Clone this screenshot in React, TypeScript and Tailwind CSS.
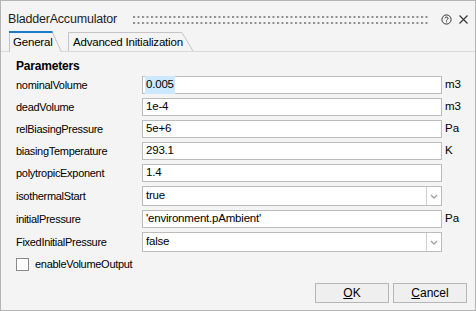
import React from "react";

function Chevron() {
  return (
    <svg width="8" height="5" viewBox="0 0 8 5">
      <path d="M1 1 L4 4 L7 1" fill="none" stroke="#a0a0a0" strokeWidth="1.3" />
    </svg>
  );
}

function TextRow({ label, value, unit, selected }: { label: string; value: string; unit?: string; selected?: boolean }) {
  return (
    <div className="h-[22px] flex items-start">
      <div className="w-[126px] h-[18px] flex items-center text-[11px] tracking-[-0.3px]">{label}</div>
      <div className="w-[300px] h-[18px] border border-[#bcbcbc] bg-white pl-[2px] flex items-center text-[11.5px] tracking-[-0.2px]">
        {selected ? <span className="bg-[#cce8ff] px-[1px]">{value}</span> : <span className="px-[1px]">{value}</span>}
      </div>
      <div className="ml-[3px] h-[18px] flex items-center text-[11.5px]">{unit}</div>
    </div>
  );
}

function ComboRow({ label, value }: { label: string; value: string }) {
  return (
    <div className="h-[24px] flex items-start">
      <div className="w-[126px] h-[20px] flex items-center text-[11px] tracking-[-0.3px]">{label}</div>
      <div className="w-[300px] h-[20px] border border-[#bcbcbc] bg-white flex items-stretch">
        <div className="flex-1 pl-[3px] flex items-center text-[11.5px] tracking-[-0.2px]">{value}</div>
        <div className="w-[15px] border-l border-[#d0d0d0] flex items-center justify-center">
          <Chevron />
        </div>
      </div>
    </div>
  );
}

export default function App() {
  return (
    <div className="w-[476px] h-[311px] border border-[#b4b4b4] bg-[#f4f4f4] flex flex-col text-black font-['Liberation_Sans',Arial,sans-serif]">
      {/* title bar */}
      <div className="h-[30px] pt-[7px] pl-[7px] flex items-center">
        <div className="text-[12.5px] text-[#1e1e1e] tracking-[-0.2px]">BladderAccumulator</div>
        <svg className="ml-[16px]" width="296" height="8">
          <defs>
            <pattern id="grip" width="4.5" height="6" patternUnits="userSpaceOnUse">
              <rect x="0" y="0" width="2" height="2" fill="#8c8c8c" />
            </pattern>
          </defs>
          <rect x="0" y="0" width="296" height="8" fill="url(#grip)" />
        </svg>
        <svg className="ml-[12px]" width="11" height="11" viewBox="0 0 11 11">
          <circle cx="5.5" cy="5.5" r="4.6" fill="none" stroke="#333" strokeWidth="1" />
          <path d="M3.9 4.3 C3.9 2.6 7.1 2.6 7.1 4.3 C7.1 5.4 5.5 5.4 5.5 6.6" fill="none" stroke="#333" strokeWidth="1" />
          <rect x="5" y="7.4" width="1" height="1" fill="#333" />
        </svg>
        <svg className="ml-[7px]" width="9" height="9" viewBox="0 0 9 9">
          <path d="M0.5 0.5 L8.5 8.5 M8.5 0.5 L0.5 8.5" stroke="#333" strokeWidth="1.1" />
        </svg>
      </div>
      {/* tabs */}
      <div className="h-[20px] flex items-end pl-[8px]">
        <div className="relative z-10 w-[53px] h-[21px] mb-[-1px] flex items-start">
          <svg className="absolute inset-0" width="53" height="21">
            <polygon points="0,0 43,0 52.5,21 0,21" fill="#f4f4f4" />
            <path d="M0.5 21 V1 M43 0.5 L52.5 21" fill="none" stroke="#c4c4c4" strokeWidth="1" />
            <rect x="0" y="0" width="43.5" height="2" fill="#1a7cc8" />
          </svg>
          <span className="relative pl-[4px] pt-[5px] text-[11.5px] leading-[12px] tracking-[-0.2px]">General</span>
        </div>
        <div className="relative ml-[6px] w-[126px] h-[19px] flex items-start">
          <svg className="absolute inset-0" width="126" height="19">
            <path d="M0.5 19 V0.5 H114 L125 19" fill="none" stroke="#c4c4c4" strokeWidth="1" />
          </svg>
          <span className="relative pl-[5px] pt-[4px] text-[11.5px] leading-[12px] tracking-[-0.2px]">Advanced Initialization</span>
        </div>
      </div>
      {/* pane */}
      <div className="flex-1 flex flex-col border-t border-[#d9d9d9] pl-[15px] pt-[6px]">
        <div className="h-[16px] leading-[16px] text-[12px] font-bold tracking-[-0.2px]">Parameters</div>
        <div className="mt-[2px] flex flex-col">
          <TextRow label="nominalVolume" value="0.005" unit="m3" selected />
          <TextRow label="deadVolume" value="1e-4" unit="m3" />
          <TextRow label="relBiasingPressure" value="5e+6" unit="Pa" />
          <TextRow label="biasingTemperature" value="293.1" unit="K" />
          <TextRow label="polytropicExponent" value="1.4" />
          <ComboRow label="isothermalStart" value="true" />
          <TextRow label="initialPressure" value="'environment.pAmbient'" unit="Pa" />
          <ComboRow label="FixedInitialPressure" value="false" />
        </div>
        <div className="mt-[1px] h-[14px] flex items-center">
          <div className="w-[13px] h-[13px] border border-[#8a8a8a] bg-white" />
          <span className="ml-[6px] text-[11px] tracking-[-0.3px]">enableVolumeOutput</span>
        </div>
        <div className="mt-[12px] flex justify-end gap-[4px] pr-[8px]">
          <div className="w-[74px] h-[20px] border border-[#b6b6b6] bg-[#efefef] flex items-center justify-center text-[12px]">
            <span><span className="underline">O</span>K</span>
          </div>
          <div className="w-[74px] h-[20px] border border-[#b6b6b6] bg-[#efefef] flex items-center justify-center text-[12px]">
            <span><span className="underline">C</span>ancel</span>
          </div>
        </div>
      </div>
    </div>
  );
}
